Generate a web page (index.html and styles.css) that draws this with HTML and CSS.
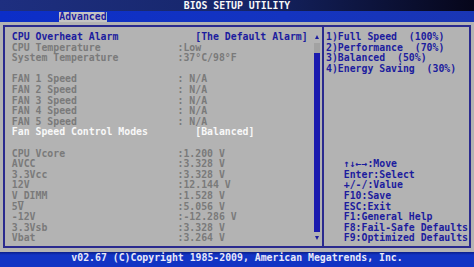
FILE: index.html
```html
<!DOCTYPE html>
<html lang="en">
<head>
  <meta charset="UTF-8" />
  <meta name="viewport" content="width=device-width, initial-scale=1.0" />
  <title>BIOS Setup Utility</title>
  <link rel="stylesheet" href="styles.css">
</head>
<body>
  <div class="screen">
    <header class="title-bar">BIOS SETUP UTILITY</header>
    <nav class="tab-bar"><span class="tab">Advanced</span></nav>

    <main class="frame">
      <section class="settings">
        <div class="row option"><span class="label">CPU Overheat Alarm</span><span class="value">[The Default Alarm]</span></div>
        <div class="row"><span class="label">CPU Temperature</span><span class="value">:Low</span></div>
        <div class="row"><span class="label">System Temperature</span><span class="value">:37°C/98°F</span></div>
        <div class="row"></div>
        <div class="row"><span class="label">FAN 1 Speed</span><span class="value">: N/A</span></div>
        <div class="row"><span class="label">FAN 2 Speed</span><span class="value">: N/A</span></div>
        <div class="row"><span class="label">FAN 3 Speed</span><span class="value">: N/A</span></div>
        <div class="row"><span class="label">FAN 4 Speed</span><span class="value">: N/A</span></div>
        <div class="row"><span class="label">FAN 5 Speed</span><span class="value">: N/A</span></div>
        <div class="row option selected"><span class="label">Fan Speed Control Modes</span><span class="value">[Balanced]</span></div>
        <div class="row"></div>
        <div class="row"><span class="label">CPU Vcore</span><span class="value">:1.200 V</span></div>
        <div class="row"><span class="label">AVCC</span><span class="value">:3.328 V</span></div>
        <div class="row"><span class="label">3.3Vcc</span><span class="value">:3.328 V</span></div>
        <div class="row"><span class="label">12V</span><span class="value">:12.144 V</span></div>
        <div class="row"><span class="label">V_DIMM</span><span class="value">:1.528 V</span></div>
        <div class="row"><span class="label">5V</span><span class="value">:5.056 V</span></div>
        <div class="row"><span class="label">-12V</span><span class="value">:-12.286 V</span></div>
        <div class="row"><span class="label">3.3Vsb</span><span class="value">:3.328 V</span></div>
        <div class="row"><span class="label">Vbat</span><span class="value">:3.264 V</span></div>
      </section>

      <div class="scrollbar">
        <span class="arrow up"></span>
        <div class="track"><div class="thumb"></div></div>
        <span class="arrow down"></span>
      </div>

      <aside class="help">
        <ul class="choices">
          <li>1)Full Speed  (100%)</li>
          <li>2)Performance  (70%)</li>
          <li>3)Balanced  (50%)</li>
          <li>4)Energy Saving  (30%)</li>
        </ul>
        <ul class="keys">
          <li>↑↓←→:Move</li>
          <li>Enter:Select</li>
          <li>+/-/:Value</li>
          <li>F10:Save</li>
          <li>ESC:Exit</li>
          <li>F1:General Help</li>
          <li>F8:Fail-Safe Defaults</li>
          <li>F9:Optimized Defaults</li>
        </ul>
      </aside>
    </main>

    <footer class="copyright">v02.67 (C)Copyright 1985-2009, American Megatrends, Inc.</footer>
  </div>
</body>
</html>
```

FILE: styles.css
```css
:root {
  --bios-gray: #b3b3b3;
  --bios-dim: #7a7a7a;
  --bios-blue: #1c1c9e;
  --bios-line: #2a2a8e;
  --bios-white: #f8f8f8;
  --bar-blue: #1234c4;
}

* {
  box-sizing: border-box;
}

body {
  margin: 0;
  background-color: var(--bios-gray);
  font-family: 'DejaVu Sans Mono', 'Liberation Mono', monospace;
  font-size: 9.84px;
  font-weight: bold;
}

.screen {
  width: 474px;
  height: 267px;
  display: flex;
  flex-direction: column;
  background-color: var(--bios-gray);
  overflow: hidden;
}

.title-bar {
  height: 11px;
  line-height: 11px;
  text-align: center;
  color: var(--bios-white);
  background: linear-gradient(to right, #1e2f80, #16266a 50%, #06061a);
}

.tab-bar {
  height: 11px;
  line-height: 10px;
  padding-left: 59.25px;
  background: linear-gradient(to right, #0c2ec8, #1434c0 60%, #1a36b4);
}

.tab {
  display: inline-block;
  height: 10px;
  margin-top: 1px;
  background-color: #c4c4c4;
  color: var(--bios-blue);
}

.frame {
  display: flex;
  height: 223px;
  margin: 3px 3px 0;
  border: 2px solid var(--bios-line);
}

.settings {
  flex: 0 0 309px;
  padding: 5px 0 0 6.85px;
}

.row {
  display: grid;
  grid-template-columns: 28ch 1fr;
  height: 10.6px;
  line-height: 10px;
  white-space: pre;
  color: var(--bios-dim);
}

.row.option {
  color: var(--bios-blue);
}

.row.option .value {
  margin-left: 3ch;
}

.row.selected {
  color: var(--bios-white);
}

.scrollbar {
  flex: 0 0 6px;
  display: flex;
  flex-direction: column;
  margin-right: 2px;
  padding: 5px 0 3px;
}

.arrow {
  height: 10.6px;
  display: flex;
  align-items: center;
  justify-content: center;
}

.arrow::before {
  content: '';
  border-left: 2.5px solid transparent;
  border-right: 2.5px solid transparent;
}

.arrow.up::before {
  border-bottom: 4px solid var(--bios-blue);
}

.arrow.down::before {
  border-top: 4px solid var(--bios-blue);
}

.track {
  flex: 1;
  margin-top: 0.5px;
  background-color: #1a1aae;
}

.thumb {
  height: 10px;
  background-color: #a2a2a2;
}

.help {
  flex: 1;
  display: flex;
  flex-direction: column;
  justify-content: space-between;
  padding: 5px 0 2px 2px;
  border-left: 2px solid var(--bios-line);
  color: var(--bios-blue);
}

.help ul {
  list-style: none;
  margin: 0;
  padding: 0;
}

.help li {
  height: 10.6px;
  line-height: 10px;
  white-space: pre;
}

.keys {
  padding-left: 3ch !important;
}

.copyright {
  height: 15px;
  margin-top: 4px;
  line-height: 12px;
  text-align: center;
  color: #e8e8f8;
  background: linear-gradient(to bottom, #0a1e8a, var(--bar-blue) 3px);
}
```
